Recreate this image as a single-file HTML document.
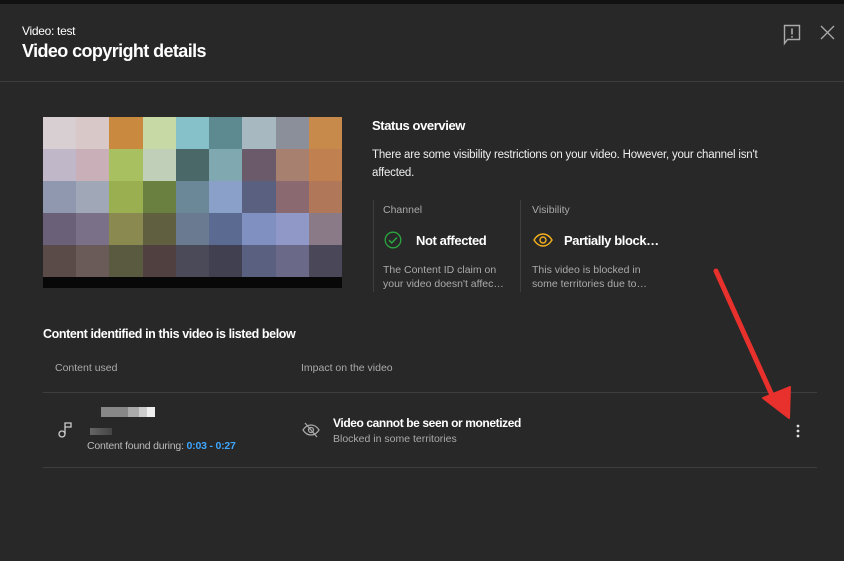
<!DOCTYPE html>
<html><head><meta charset="utf-8"><style>
*{margin:0;padding:0;box-sizing:border-box}
body{width:844px;height:561px;background:#282828;font-family:"Liberation Sans",Arial,sans-serif;color:#fff;position:relative;overflow:hidden}
.top{position:absolute;left:0;top:0;width:844px;height:4px;background:#111}
.a{position:absolute;white-space:nowrap}
.b{font-weight:bold;letter-spacing:-0.4px}
.thumb{position:absolute;left:43px;top:117px;width:299px;height:171px;display:grid;grid-template-columns:repeat(9,1fr);grid-template-rows:repeat(5,32px) 11px}
.bar{grid-column:1/10;background:#080808}
</style></head><body>
<div class="top"></div>
<div class="a" style="left:22px;top:24px;font-size:12px;letter-spacing:-0.3px">Video: test</div>
<div class="a b" style="left:22px;top:41px;font-size:18px;letter-spacing:-0.6px">Video copyright details</div>
<svg class="a" style="left:783px;top:24px" width="18" height="22" viewBox="0 0 18 22"><path d="M1.5 1.5h15v14h-12l-3 4z" fill="none" stroke="#aaa" stroke-width="1.4"/><path d="M9 4.5v6M9 12v1.6" stroke="#aaa" stroke-width="1.6"/></svg>
<svg class="a" style="left:820px;top:25px" width="15" height="15" viewBox="0 0 15 15"><path d="M1 1l13 13M14 1L1 14" stroke="#aaa" stroke-width="1.3"/></svg>
<div class="a" style="left:0;top:81px;width:844px;height:1px;background:#3e3e3e"></div>

<div class="thumb">
<div style="background:#d8cfd3"></div><div style="background:#d9c8c8"></div><div style="background:#c98a3f"></div><div style="background:#c7d9a4"></div><div style="background:#86c0c8"></div><div style="background:#5c8a90"></div><div style="background:#a8b8c0"></div><div style="background:#8a8f9a"></div><div style="background:#c88a4a"></div>
<div style="background:#c0b8c8"></div><div style="background:#c9b0b8"></div><div style="background:#a8c060"></div><div style="background:#c0d0b8"></div><div style="background:#4a6868"></div><div style="background:#80a8b0"></div><div style="background:#6a5a6a"></div><div style="background:#a88070"></div><div style="background:#c08050"></div>
<div style="background:#9098b0"></div><div style="background:#a0a8b8"></div><div style="background:#9ab050"></div><div style="background:#6a8040"></div><div style="background:#6a8898"></div><div style="background:#8aa0c8"></div><div style="background:#5a6080"></div><div style="background:#8a6a70"></div><div style="background:#b07858"></div>
<div style="background:#6a6078"></div><div style="background:#7a7088"></div><div style="background:#8a8a50"></div><div style="background:#606040"></div><div style="background:#6a7a90"></div><div style="background:#5a6a90"></div><div style="background:#8090c0"></div><div style="background:#9098c8"></div><div style="background:#8a7a88"></div>
<div style="background:#5a4a48"></div><div style="background:#6a5a58"></div><div style="background:#5a5a40"></div><div style="background:#504040"></div><div style="background:#4a4a58"></div><div style="background:#404050"></div><div style="background:#5a6080"></div><div style="background:#6a6a88"></div><div style="background:#4a4858"></div>
<div class="bar"></div>
</div>

<div class="a b" style="left:372px;top:118px;font-size:13px">Status overview</div>
<div class="a" style="left:372px;top:146px;width:420px;white-space:normal;font-size:11.5px;line-height:18px;color:#eee;letter-spacing:-0.2px">There are some visibility restrictions on your video. However, your channel isn't affected.</div>
<div class="a" style="left:373px;top:200px;width:1px;height:92px;background:#3e3e3e"></div>
<div class="a" style="left:520px;top:200px;width:1px;height:92px;background:#3e3e3e"></div>
<div class="a" style="left:383px;top:204px;font-size:10.5px;color:#aaa">Channel</div>
<div class="a" style="left:532px;top:204px;font-size:10.5px;color:#aaa">Visibility</div>
<svg class="a" style="left:384px;top:231px" width="18" height="18" viewBox="0 0 18 18"><circle cx="9" cy="9" r="7.8" fill="none" stroke="#2ba640" stroke-width="1.3"/><path d="M5 9.2l2.7 2.7L13 6.5" fill="none" stroke="#2ba640" stroke-width="1.5"/></svg>
<div class="a b" style="left:416px;top:233px;font-size:13px">Not affected</div>
<svg class="a" style="left:533px;top:233px" width="20" height="14" viewBox="0 0 20 14"><path d="M1 7C4 2 7 1 10 1s6 1 9 6c-3 5-6 6-9 6S4 12 1 7z" fill="none" stroke="#f2b01e" stroke-width="1.4"/><circle cx="10" cy="7" r="3" fill="none" stroke="#f2b01e" stroke-width="1.4"/></svg>
<div class="a b" style="left:564px;top:233px;font-size:13px">Partially block…</div>
<div class="a" style="left:383px;top:263px;font-size:10.5px;line-height:14px;color:#aaa">The Content ID claim on<br>your video doesn't affec…</div>
<div class="a" style="left:532px;top:263px;font-size:10.5px;line-height:14px;color:#aaa">This video is blocked in<br>some territories due to…</div>

<div class="a b" style="left:43px;top:327px;font-size:12.5px">Content identified in this video is listed below</div>
<div class="a" style="left:55px;top:362px;font-size:10.5px;color:#aaa">Content used</div>
<div class="a" style="left:301px;top:362px;font-size:10.5px;color:#aaa">Impact on the video</div>
<div class="a" style="left:43px;top:392px;width:774px;height:1px;background:#3e3e3e"></div>
<div class="a" style="left:43px;top:467px;width:774px;height:1px;background:#3e3e3e"></div>
<svg class="a" style="left:57px;top:421px" width="16" height="18" viewBox="0 0 16 18"><circle cx="5" cy="13" r="3" fill="none" stroke="#ccc" stroke-width="1.3"/><path d="M8 13V2h6v4H8" fill="none" stroke="#ccc" stroke-width="1.3"/></svg>
<div class="a" style="left:101px;top:407px;width:54px;height:10px;background:linear-gradient(90deg,#888 0 50%,#aaa 50% 70%,#ccc 70% 85%,#eee 85%)"></div>
<div class="a" style="left:90px;top:428px;width:22px;height:7px;background:linear-gradient(90deg,#666,#444)"></div>
<div class="a" style="left:87px;top:440px;font-size:10.5px;color:#bbb;letter-spacing:-0.2px">Content found during: <span style="color:#3ea6ff;font-weight:bold">0:03 - 0:27</span></div>
<svg class="a" style="left:302px;top:422px" width="18" height="16" viewBox="0 0 18 16"><path d="M1 8c2.5-4 5-5 8-5s5.5 1 8 5c-2.5 4-5 5-8 5S3.5 12 1 8z" fill="none" stroke="#aaa" stroke-width="1.2"/><circle cx="9" cy="8" r="2.5" fill="none" stroke="#aaa" stroke-width="1.2"/><path d="M3 1l12 14" stroke="#aaa" stroke-width="1.2"/></svg>
<div class="a b" style="left:333px;top:416px;font-size:12px">Video cannot be seen or monetized</div>
<div class="a" style="left:333px;top:433px;font-size:10.5px;color:#aaa">Blocked in some territories</div>
<svg class="a" style="left:794px;top:423px" width="8" height="16" viewBox="0 0 8 16"><circle cx="4" cy="3" r="1.4" fill="#ddd"/><circle cx="4" cy="8" r="1.4" fill="#ddd"/><circle cx="4" cy="13" r="1.4" fill="#ddd"/></svg>
<svg class="a" style="left:0;top:0" width="844" height="561"><path d="M716 271L771 393" stroke="#e8302c" stroke-width="5" stroke-linecap="round"/><path d="M763 398L790 387L789 418Z" fill="#e8302c" stroke="#e8302c" stroke-width="2" stroke-linejoin="round"/></svg>
</body></html>
